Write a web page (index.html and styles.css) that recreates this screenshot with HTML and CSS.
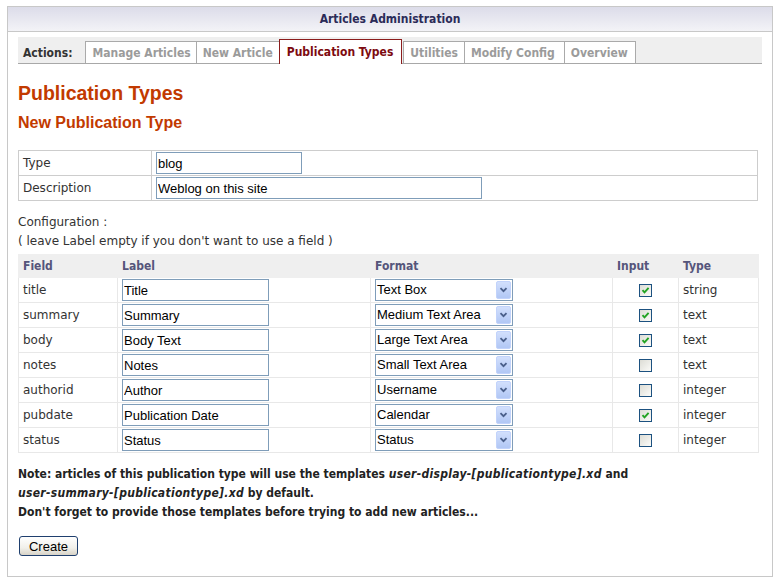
FILE: index.html
```html
<!DOCTYPE html>
<html lang="en">
<head>
<meta charset="utf-8">
<title>Articles Administration</title>
<link rel="stylesheet" href="styles.css">
</head>
<body>
<div class="panel">
  <div class="panel-head">Articles Administration</div>
  <div class="panel-body">
    <div class="tabs">
      <span class="tabs-label">Actions:</span>
      <a class="tab tab-manage">Manage Articles</a>
      <a class="tab">New Article</a>
      <a class="tab tab-active">Publication Types</a>
      <a class="tab">Utilities</a>
      <a class="tab tab-config">Modify Config</a>
      <a class="tab tab-last">Overview</a>
    </div>

    <h1 class="page-title">Publication Types</h1>
    <h2 class="sub-title">New Publication Type</h2>

    <table class="form-table">
      <tr>
        <td class="form-label">Type</td>
        <td><input class="text-input w-type" type="text" value="blog"></td>
      </tr>
      <tr>
        <td class="form-label">Description</td>
        <td><input class="text-input w-desc" type="text" value="Weblog on this site"></td>
      </tr>
    </table>

    <p class="config-intro">Configuration :<br>( leave Label empty if you don't want to use a field )</p>

    <table class="config">
      <colgroup>
        <col class="c-field"><col class="c-label"><col class="c-format"><col class="c-input"><col class="c-type">
      </colgroup>
      <tr>
        <th>Field</th><th>Label</th><th>Format</th><th>Input</th><th>Type</th>
      </tr>
      <tr>
        <td>title</td>
        <td><input class="text-input w-label" type="text" value="Title"></td>
        <td><span class="select"><span class="select-text">Text Box</span><span class="select-arrow"><svg width="9" height="6" viewBox="0 0 9 6"><path d="M1.5 1.2 L4.5 4.2 L7.5 1.2" fill="none" stroke="#4a5f8a" stroke-width="1.8"/></svg></span></span></td>
        <td class="center"><span class="check"><svg width="11" height="11" viewBox="0 0 11 11"><path d="M2.5 5.2 L4.5 7.4 L8.6 2.8" fill="none" stroke="#22a322" stroke-width="1.9"/></svg></span></td>
        <td>string</td>
      </tr>
      <tr>
        <td>summary</td>
        <td><input class="text-input w-label" type="text" value="Summary"></td>
        <td><span class="select"><span class="select-text">Medium Text Area</span><span class="select-arrow"><svg width="9" height="6" viewBox="0 0 9 6"><path d="M1.5 1.2 L4.5 4.2 L7.5 1.2" fill="none" stroke="#4a5f8a" stroke-width="1.8"/></svg></span></span></td>
        <td class="center"><span class="check"><svg width="11" height="11" viewBox="0 0 11 11"><path d="M2.5 5.2 L4.5 7.4 L8.6 2.8" fill="none" stroke="#22a322" stroke-width="1.9"/></svg></span></td>
        <td>text</td>
      </tr>
      <tr>
        <td>body</td>
        <td><input class="text-input w-label" type="text" value="Body Text"></td>
        <td><span class="select"><span class="select-text">Large Text Area</span><span class="select-arrow"><svg width="9" height="6" viewBox="0 0 9 6"><path d="M1.5 1.2 L4.5 4.2 L7.5 1.2" fill="none" stroke="#4a5f8a" stroke-width="1.8"/></svg></span></span></td>
        <td class="center"><span class="check"><svg width="11" height="11" viewBox="0 0 11 11"><path d="M2.5 5.2 L4.5 7.4 L8.6 2.8" fill="none" stroke="#22a322" stroke-width="1.9"/></svg></span></td>
        <td>text</td>
      </tr>
      <tr>
        <td>notes</td>
        <td><input class="text-input w-label" type="text" value="Notes"></td>
        <td><span class="select"><span class="select-text">Small Text Area</span><span class="select-arrow"><svg width="9" height="6" viewBox="0 0 9 6"><path d="M1.5 1.2 L4.5 4.2 L7.5 1.2" fill="none" stroke="#4a5f8a" stroke-width="1.8"/></svg></span></span></td>
        <td class="center"><span class="check"></span></td>
        <td>text</td>
      </tr>
      <tr>
        <td>authorid</td>
        <td><input class="text-input w-label" type="text" value="Author"></td>
        <td><span class="select"><span class="select-text">Username</span><span class="select-arrow"><svg width="9" height="6" viewBox="0 0 9 6"><path d="M1.5 1.2 L4.5 4.2 L7.5 1.2" fill="none" stroke="#4a5f8a" stroke-width="1.8"/></svg></span></span></td>
        <td class="center"><span class="check"></span></td>
        <td>integer</td>
      </tr>
      <tr>
        <td>pubdate</td>
        <td><input class="text-input w-label" type="text" value="Publication Date"></td>
        <td><span class="select"><span class="select-text">Calendar</span><span class="select-arrow"><svg width="9" height="6" viewBox="0 0 9 6"><path d="M1.5 1.2 L4.5 4.2 L7.5 1.2" fill="none" stroke="#4a5f8a" stroke-width="1.8"/></svg></span></span></td>
        <td class="center"><span class="check"><svg width="11" height="11" viewBox="0 0 11 11"><path d="M2.5 5.2 L4.5 7.4 L8.6 2.8" fill="none" stroke="#22a322" stroke-width="1.9"/></svg></span></td>
        <td>integer</td>
      </tr>
      <tr>
        <td>status</td>
        <td><input class="text-input w-label" type="text" value="Status"></td>
        <td><span class="select"><span class="select-text">Status</span><span class="select-arrow"><svg width="9" height="6" viewBox="0 0 9 6"><path d="M1.5 1.2 L4.5 4.2 L7.5 1.2" fill="none" stroke="#4a5f8a" stroke-width="1.8"/></svg></span></span></td>
        <td class="center"><span class="check"></span></td>
        <td>integer</td>
      </tr>
    </table>

    <p class="note">Note: articles of this publication type will use the templates <em>user-display-[publicationtype].xd</em> and<br><em>user-summary-[publicationtype].xd</em> by default.<br>Don't forget to provide those templates before trying to add new articles...</p>

    <div class="actions"><button class="btn" type="button">Create</button></div>
  </div>
</div>
</body>
</html>
```

FILE: styles.css
```css
body {
  margin: 0;
  padding: 6px 5px 10px 7px;
  background: #fff;
  color: #333;
  font-family: "DejaVu Sans", Verdana, sans-serif;
  font-size: 12px;
}

.panel {
  width: 764px;
  border: 1px solid #c8c8c8;
}

.panel-head {
  height: 24px;
  line-height: 24px;
  text-align: center;
  font-family: "DejaVu Sans Condensed", "DejaVu Sans", sans-serif;
  font-stretch: condensed;
  font-weight: bold;
  color: #2b2b58;
  background: linear-gradient(#dcdce9, #f3f3f7);
  border-bottom: 1px solid #c8c8c8;
}

.panel-body {
  padding: 5px 10px 20px;
}

/* tabs */
.tabs {
  display: flex;
  align-items: flex-end;
  height: 26px;
  background: #efefef;
  border-bottom: 1px solid #a8a8a8;
  font-family: "DejaVu Sans Condensed", "DejaVu Sans", sans-serif;
  font-stretch: condensed;
  font-weight: bold;
}

.tabs-label {
  padding: 2px 13px 0 5px;
  line-height: 20px;
  color: #333;
}

.tab {
  padding: 1px 6px 0;
  line-height: 20px;
  color: #9b9b9b;
  background: #fff;
  border-top: 1px solid #aaa;
  border-left: 1px solid #aaa;
  text-decoration: none;
}

.tab-manage {
  padding-right: 5px;
}

.tab-config {
  padding-right: 9px;
}

.tab-last {
  border-right: 1px solid #aaa;
  padding-right: 7px;
}

.tab-active {
  padding: 2px 8px 2px 7px;
  margin-bottom: -1px;
  margin-right: 1px;
  color: #7d0a10;
  border: 1px solid #8b1c1c;
  border-bottom: 0;
}

/* headings */
.page-title {
  margin: 18px 0 8px;
  font-family: "Liberation Sans", Arial, sans-serif;
  font-size: 19.5px;
  line-height: 23px;
  font-weight: bold;
  color: #c23a00;
}

.sub-title {
  margin: 0 0 18px;
  font-family: "Liberation Sans", Arial, sans-serif;
  font-size: 16px;
  line-height: 19px;
  font-weight: bold;
  color: #c23a00;
}

/* form table */
.form-table {
  width: 740px;
  border-collapse: collapse;
}

.form-table td {
  height: 24px;
  padding: 0 4px;
  border: 1px solid #cdcdcd;
}

.form-table .form-label {
  width: 124px;
}

.text-input {
  box-sizing: border-box;
  height: 22px;
  padding: 0 1px;
  border: 1px solid #7f9db9;
  font-family: "Liberation Sans", Arial, sans-serif;
  font-size: 13px;
  color: #000;
  vertical-align: middle;
  background: #fff;
}

.w-type { width: 146px; }
.w-desc { width: 326px; }
.w-label { width: 147px; }

.config-intro {
  margin: 12px 0 3px;
  line-height: 19px;
}

/* config table */
.config {
  width: 740px;
  table-layout: fixed;
  border-collapse: collapse;
}

.c-field { width: 99px; }
.c-label { width: 253px; }
.c-format { width: 242px; }
.c-input { width: 66px; }
.c-type { width: 80px; }

.config th {
  height: 22px;
  padding: 0 4px;
  text-align: left;
  background: #efefef;
  color: #55557b;
  border: 1px solid #efefef;
  font-family: "DejaVu Sans Condensed", "DejaVu Sans", sans-serif;
  font-stretch: condensed;
  font-weight: bold;
}

.config td {
  height: 24px;
  padding: 0 4px;
  border: 1px solid #e8e8e8;
  white-space: nowrap;
}

.config td.center {
  text-align: center;
}

.select {
  position: relative;
  display: inline-block;
  box-sizing: border-box;
  width: 138px;
  height: 22px;
  padding-left: 1px;
  vertical-align: middle;
  border: 1px solid #7f9db9;
  background: #fff;
  font-family: "Liberation Sans", Arial, sans-serif;
  font-size: 13px;
  line-height: 20px;
  color: #000;
}

.select-arrow {
  position: absolute;
  top: 1px;
  right: 1px;
  bottom: 1px;
  width: 15px;
  box-sizing: border-box;
  display: flex;
  align-items: center;
  justify-content: center;
  border: 1px solid #c2d3fb;
  border-radius: 2px;
  background: linear-gradient(#d2dffc, #b1c7f5);
}

.check {
  display: inline-block;
  box-sizing: border-box;
  width: 13px;
  height: 13px;
  vertical-align: middle;
  border: 1px solid #1c5180;
  background: linear-gradient(135deg, #dcdcd5, #fbfbf8);
}

.check svg {
  display: block;
}

/* note */
.note {
  margin: 12px 0 14px;
  line-height: 19px;
  color: #222;
  font-family: "DejaVu Sans Condensed", "DejaVu Sans", sans-serif;
  font-stretch: condensed;
  font-weight: bold;
}

.note em {
  font-style: italic;
  letter-spacing: 0.3px;
}

.actions {
  line-height: 0;
}

.btn {
  width: 59px;
  height: 20px;
  margin-left: 1px;
  padding: 0;
  border: 1px solid #1f3f6e;
  border-radius: 3px;
  background: linear-gradient(#ffffff, #f1f0ea 60%, #d8d3c7);
  font-family: "Liberation Sans", Arial, sans-serif;
  font-size: 13px;
  color: #000;
}
```
